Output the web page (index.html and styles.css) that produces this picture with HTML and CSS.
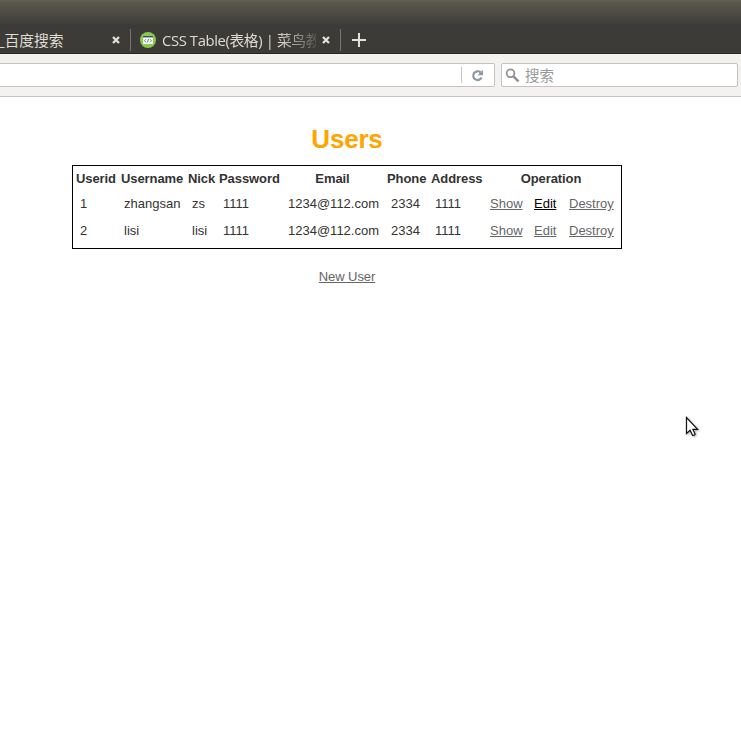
FILE: index.html
```
<!DOCTYPE html>
<html lang="zh-CN">
<head>
<meta charset="utf-8">
<title>Users</title>
<link rel="stylesheet" href="styles.css">
</head>
<body>
<div class="titlebar"></div>
<div class="tabs">
  <div class="tab tab-first">
    <span class="tab-label">_百度搜索</span>
    <svg class="close" width="8" height="8" viewBox="0 0 8 8"><path d="M1 1l6 6M7 1l-6 6"/></svg>
  </div>
  <div class="tab tab-second">
    <svg class="favicon" width="16" height="16" viewBox="0 0 16 16"><circle cx="8" cy="8" r="8" fill="#8cc84b"/><path d="M3 4h10v8H3z" fill="#f4f8f4"/><path d="M3 4h10v1.4H3z" fill="#31546b"/><path d="M6 7.2L4.5 8.7 6 10.2M10 7.2l1.5 1.5-1.5 1.5M8.7 7l-1.4 3.4" fill="none" stroke="#52656f" stroke-width=".8"/></svg>
    <span class="tab-label faded">CSS Table(表格) | 菜鸟教</span>
    <svg class="close" width="8" height="8" viewBox="0 0 8 8"><path d="M1 1l6 6M7 1l-6 6"/></svg>
  </div>
  <svg class="plus" width="14" height="14" viewBox="0 0 14 14"><path d="M7 0v14M0 7h14"/></svg>
</div>
<div class="toolbar">
  <div class="url">
    <div class="reload"><svg width="13" height="13" viewBox="0 0 13 13"><path d="M9.6 3.4A4.4 4.4 0 1 0 10.6 8.6" fill="none" stroke="#8c99a3" stroke-width="2.2"/><path d="M12 .8v5.4H6.6z" fill="#8c99a3"/></svg></div>
  </div>
  <div class="search">
    <svg width="15" height="15" viewBox="0 0 15 15"><circle cx="5.5" cy="5.3" r="3.9" fill="none" stroke="#919191" stroke-width="1.8"/><path d="M8.5 8.3l5 5" stroke="#919191" stroke-width="2.4"/></svg>
    <span>搜索</span>
  </div>
</div>
<main class="page">
  <h1>Users</h1>
  <table>
    <colgroup>
      <col class="c-id"><col class="c-name"><col class="c-nick"><col class="c-pass"><col class="c-email"><col class="c-phone"><col class="c-addr"><col class="c-show"><col class="c-edit"><col class="c-destroy">
    </colgroup>
    <thead>
      <tr><th>Userid</th><th>Username</th><th>Nick</th><th>Password</th><th>Email</th><th>Phone</th><th>Address</th><th colspan="3">Operation</th></tr>
    </thead>
    <tbody>
      <tr><td>1</td><td>zhangsan</td><td>zs</td><td>1111</td><td>1234@112.com</td><td>2334</td><td>1111</td><td><a href="#">Show</a></td><td><a class="active" href="#">Edit</a></td><td><a href="#">Destroy</a></td></tr>
      <tr><td>2</td><td>lisi</td><td>lisi</td><td>1111</td><td>1234@112.com</td><td>2334</td><td>1111</td><td><a href="#">Show</a></td><td><a href="#">Edit</a></td><td><a href="#">Destroy</a></td></tr>
    </tbody>
  </table>
  <a class="new-user" href="#">New User</a>
</main>
<svg class="cursor" width="15" height="22" viewBox="0 0 15 22"><path d="M1.5 1.5v16l3.6-3.3 2.4 5.1q2.2.3 2.6-1.3l-2.2-4.6h4.7z" fill="#fff" stroke="#111" stroke-width="1.2"/></svg>
</body>
</html>
```
FILE: styles.css
```
* { box-sizing: border-box; }
body {
  margin: 0;
  height: 741px;
  overflow: hidden;
  background: #fff;
  color: #333;
  font: 13px/18px "Liberation Sans", Arial, sans-serif;
}
svg { display: block; flex: none; }
.titlebar {
  height: 24px;
  background: linear-gradient(#65624f 0, #5b584d 2px, #3f3e39 24px);
}
.tabs {
  display: flex;
  height: 30px;
  background: #3c3b37;
  border-bottom: 1px solid #262622;
  color: #dfdbd2;
  font: 14.8px/20px "Open Sans", "Noto Sans CJK SC", sans-serif;
}
.tab {
  display: flex;
  align-items: center;
  height: 22px;
  margin-top: 5px;
  border-right: 1px solid #77756f;
}
.tab-first { width: 131px; padding-right: 10px; justify-content: space-between; }
.tab-first .tab-label { margin-left: -2px; }
.tab-second { width: 210px; padding: 0 10px 0 9px; }
.tab-label { white-space: nowrap; }
.faded {
  width: 154px;
  margin: 0 6px;
  overflow: hidden;
  letter-spacing: -0.38px;
  -webkit-mask-image: linear-gradient(to right, #000 116px, transparent 162px);
  mask-image: linear-gradient(to right, #000 116px, transparent 162px);
}
.close { fill: none; stroke: #e4e1da; stroke-width: 2.3; }
.plus { margin: 9px 0 0 11px; stroke: #e4e1d8; stroke-width: 2; }
.toolbar {
  display: flex;
  gap: 6px;
  height: 43px;
  padding: 9px 3px 9px 0;
  background: #f3f2f1;
  border-bottom: 1px solid #c6c4c2;
}
.url, .search {
  display: flex;
  align-items: center;
  height: 24px;
  background: #fff;
  border: 1px solid #c4c2c0;
}
.url { width: 495px; border-left: 0; border-radius: 0 2px 2px 0; justify-content: flex-end; }
.reload { height: 16px; width: 33px; padding: 2px 0 0 9px; border-left: 1px solid #c4c4c4; }
.search {
  width: 237px;
  padding-left: 3px;
  gap: 5px;
  border-radius: 2px;
  color: #999;
  font: 14.5px/20px "Noto Sans CJK SC", sans-serif;
}
.page {
  display: flex;
  flex-direction: column;
  align-items: center;
  width: 550px;
  margin-left: 72px;
  padding-top: 24px;
}
h1 { margin: 0 0 8px; color: orange; font-size: 26px; line-height: 36px; letter-spacing: -0.2px; }
table {
  width: 550px;
  height: 84px;
  padding-bottom: 2px;
  table-layout: fixed;
  border: 1px solid #000;
  border-collapse: separate;
  border-spacing: 2px;
}
.c-id { width: 42px; }
.c-name { width: 66px; }
.c-nick { width: 29px; }
.c-pass { width: 63px; }
.c-email { width: 101px; }
.c-phone { width: 42px; }
.c-addr { width: 53px; }
.c-show { width: 42px; }
.c-edit { width: 33px; }
.c-destroy { width: 55px; }
th { height: 22px; padding: 2px 0 2px 1px; text-align: left; white-space: nowrap; letter-spacing: -0.08px; }
th:nth-child(5), th:nth-child(8) { padding: 2px 2px 2px 0; text-align: center; }
td { height: 25px; padding: 3px 0 4px 5px; white-space: nowrap; }
th:nth-child(2) { padding-left: 2px; }
a { color: #666; }
a.active { color: #000; }
.new-user { margin-top: 19px; letter-spacing: -0.08px; }
.cursor { position: absolute; left: 685px; top: 416px; filter: drop-shadow(1px 1px 1px #0005); }
```
